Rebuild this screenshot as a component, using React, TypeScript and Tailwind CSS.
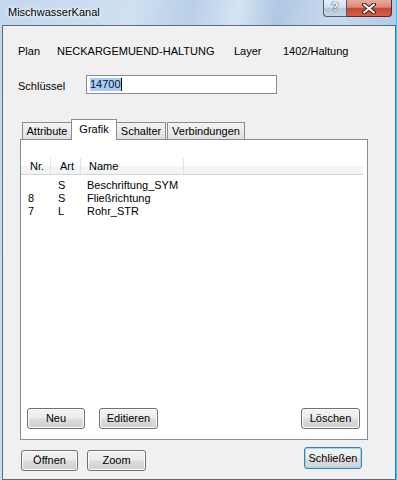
const FONT = "font-['Liberation_Sans',Arial,sans-serif]"

const ROWS = [
  { nr: "", art: "S", name: "Beschriftung_SYM" },
  { nr: "8", art: "S", name: "Fließrichtung" },
  { nr: "7", art: "L", name: "Rohr_STR" },
]

function Button({ label, className = "", primary = false }: { label: string; className?: string; primary?: boolean }) {
  return (
    <div
      className={`flex items-center justify-center rounded-[3px] border text-[11px] leading-[13px] text-black ${
        primary
          ? "border-[#3c7fb1] shadow-[inset_0_0_0_1px_#8fdcf8] bg-[linear-gradient(to_bottom,#f4f4f4_0%,#ececec_48%,#dedede_52%,#d3d3d3_100%)]"
          : "border-[#707070] shadow-[inset_0_0_0_1px_#fcfcfc] bg-[linear-gradient(to_bottom,#f2f2f2_0%,#ebebeb_48%,#dddddd_52%,#cfcfcf_100%)]"
      } ${className}`}
    >
      {label}
    </div>
  )
}

function Tab({ label, selected = false, className = "" }: { label: string; selected?: boolean; className?: string }) {
  if (selected) {
    return (
      <div
        className={`relative z-10 mb-[-1px] flex h-[21px] items-start justify-center border border-b-0 border-[#898c95] bg-white pt-[3px] text-[11px] leading-[13px] ${className}`}
      >
        {label}
      </div>
    )
  }
  return (
    <div
      className={`flex h-[17px] items-center justify-center border border-b-0 border-[#898c95] bg-[linear-gradient(to_bottom,#f3f3f3_0%,#ebebeb_50%,#dedede_100%)] text-[11px] leading-[13px] ${className}`}
    >
      {label}
    </div>
  )
}

export default function App() {
  return (
    <div
      className={`${FONT} flex h-[480px] w-[397px] flex-col border-r border-r-[#37c5ef] bg-[linear-gradient(100deg,#c3d7ed_0%,#cfe0f2_28%,#b9cfe7_40%,#d4e4f4_50%,#b0c8e3_58%,#c8daef_70%,#b5cce5_82%,#c9dbef_100%)] pl-[2px] text-black`}
    >
      {/* Title bar */}
      <div className="flex h-[25px] shrink-0 items-start">
        <span className="pl-[6px] pt-[6px] text-[11px] leading-[13px] [text-shadow:0_0_6px_#fff,0_0_3px_#fff]">
          MischwasserKanal
        </span>
        <div className="ml-auto mr-[4px] flex">
          <div className="flex h-[17px] w-[24px] items-center justify-center rounded-bl-[4px] border border-t-0 border-[#4d5d70] bg-[linear-gradient(to_bottom,#e6eef8_0%,#cfdcec_50%,#b5c6da_52%,#c6d6e8_100%)] pb-[1px] text-[12px] font-bold leading-[13px] text-white [text-shadow:0_0_1px_#364a60,0_0_1px_#364a60,0_0_1px_#364a60]">
            ?
          </div>
          <div className="flex h-[17px] w-[45px] items-center justify-center rounded-br-[4px] border border-l-0 border-t-0 border-[#5a2a22] bg-[linear-gradient(to_bottom,#e9a99c_0%,#d98a79_45%,#c6472f_52%,#d2604a_100%)]">
            <svg width="14" height="11" viewBox="0 0 14 11">
              <path d="M2 1.5 L12 9.5 M12 1.5 L2 9.5" stroke="#4a1a12" strokeWidth="4" strokeLinecap="round" />
              <path d="M2 1.5 L12 9.5 M12 1.5 L2 9.5" stroke="#fff" strokeWidth="2" strokeLinecap="round" />
            </svg>
          </div>
        </div>
      </div>

      {/* Client area */}
      <div className="flex flex-1 flex-col border border-[#5b6b7b] bg-[#f0f0f0] pt-[19px]">
        <div className="flex h-[13px] pl-[15px] text-[11px] leading-[13px]">
          <span className="w-[39px]">Plan</span>
          <span className="w-[177px]">NECKARGEMUEND-HALTUNG</span>
          <span className="w-[49px]">Layer</span>
          <span>1402/Haltung</span>
        </div>

        <div className="mt-[17px] flex items-start pl-[15px] text-[11px] leading-[13px]">
          <span className="w-[68px] pt-[5px]">Schlüssel</span>
          <div className="flex h-[19px] w-[191px] items-center border border-[#8a8c90] bg-white pl-[3px]">
            <span className="bg-[#a9cdef] text-[#001a40]">14700</span>
            <span className="h-[13px] w-px bg-black" />
          </div>
        </div>

        {/* Tabs */}
        <div className="ml-[17px] mt-[25px] flex h-[20px] items-end pl-[2px]">
          <Tab label="Attribute" className="w-[50px]" />
          <Tab label="Grafik" selected className="ml-[-1px] w-[46px]" />
          <Tab label="Schalter" className="ml-[-1px] w-[50px]" />
          <Tab label="Verbindungen" className="ml-px w-[78px]" />
        </div>

        <div className="ml-[17px] flex h-[301px] w-[348px] flex-col border border-[#898c95] bg-white">
          <div className="mr-[4px] mt-[18px] flex-1 text-[11px] leading-[13px]">
            <div className="flex h-[17px] border-b border-[#d5d5d5] bg-[linear-gradient(to_bottom,#ffffff_0%,#ffffff_50%,#f3f4f6_50%,#f3f4f6_100%)]">
              <div className="flex w-[30px] items-center border-r border-[#e3e3e3] pl-[9px]">Nr.</div>
              <div className="flex w-[30px] items-center border-r border-[#e3e3e3] pl-[9px]">Art</div>
              <div className="flex w-[103px] items-center border-r border-[#e3e3e3] pl-[8px]">Name</div>
            </div>
            <div className="mt-[4px]">
              {ROWS.map((row) => (
                <div key={row.name} className="flex h-[13px]">
                  <span className="w-[30px] pl-[7px]">{row.nr}</span>
                  <span className="w-[30px] pl-[7px]">{row.art}</span>
                  <span className="pl-[6px]">{row.name}</span>
                </div>
              ))}
            </div>
          </div>
          <div className="flex pb-[10px] pl-[6px] pr-[7px]">
            <Button label="Neu" className="h-[21px] w-[58px]" />
            <Button label="Editieren" className="ml-[14px] h-[21px] w-[59px]" />
            <Button label="Löschen" className="ml-auto h-[21px] w-[59px]" />
          </div>
        </div>

        <div className="mt-[7px] flex items-start pl-[18px] pr-[33px]">
          <Button label="Öffnen" className="mt-[3px] h-[21px] w-[57px]" />
          <Button label="Zoom" className="ml-[9px] mt-[3px] h-[21px] w-[59px]" />
          <Button label="Schließen" primary className="ml-auto h-[22px] w-[58px]" />
        </div>
      </div>
    </div>
  )
}
